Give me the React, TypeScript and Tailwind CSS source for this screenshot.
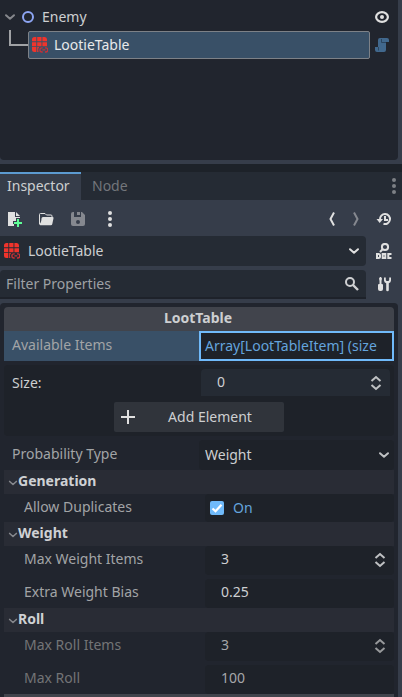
import { useState, type ReactNode } from "react";

function Chevron({ className = "", size = 12 }: { className?: string; size?: number }) {
  return (
    <svg className={className} width={size} height={size} viewBox="0 0 12 12" fill="none" stroke="currentColor" strokeWidth="2" strokeLinecap="round" strokeLinejoin="round" aria-hidden="true">
      <path d="M2 4.2 6 7.8l4-3.6" />
    </svg>
  );
}

function TableIcon() {
  return (
    <svg className="shrink-0" width="16" height="16" viewBox="0 0 16 16" aria-hidden="true">
      <g fill="#f0342c">
        <path d="M2.500 0H4.300v4.300H0V2.500A2.500 2.500 0 0 1 2.500 0z" />
        <path d="M5.200 0h4.300v4.300H5.200zM10.400 0h2A2.500 2.500 0 0 1 15 2.500v1.800h-4.600z" />
        <path d="M0 5.200h4.300v4H0zM5.200 5.200h4.300v4H5.200zM10.400 5.200H15v4h-4.600z" />
        <path d="M0 10.100h4.300V15H2.500A2.500 2.500 0 0 1 0 12.500zM5.200 10.100h1.900a4.500 4.500 0 0 0-.600 4.900H5.200z" />
      </g>
      <path d="M10.700 10.800H10a2 2 0 0 0 0 4.200h.700M13 10.800h.700a2 2 0 0 1 0 4.200H13M10.400 12.900h2.900" fill="none" stroke="#c93035" strokeWidth="1.300" />
    </svg>
  );
}

type IconButtonProps = { label: string; className?: string; tone?: string; children: ReactNode };

function IconButton({ label, className = "", tone = "text-[#e0e0e0]", children }: IconButtonProps) {
  return (
    <button type="button" aria-label={label} className={`flex size-4 shrink-0 items-center justify-center ${tone} ${className}`}>
      {children}
    </button>
  );
}

function Dots() {
  return (
    <svg width="16" height="16" viewBox="0 0 16 16" fill="currentColor" aria-hidden="true">
      <circle cx="8" cy="2" r="2" />
      <circle cx="8" cy="8" r="2" />
      <circle cx="8" cy="14" r="2" />
    </svg>
  );
}

function UpDown() {
  return (
    <svg width="12" height="16" viewBox="0 0 12 16" fill="none" stroke="currentColor" strokeWidth="2" aria-hidden="true">
      <path d="M1.500 6 6 2l4.500 4M1.500 10 6 14l4.500-4" />
    </svg>
  );
}

function Section({ title, children }: { title: string; children: ReactNode }) {
  return (
    <section>
      <h3 className="bg-[#292c35]">
        <button type="button" className="flex h-6 w-full items-center px-1 pb-0.5 font-bold text-[#cfd1d4]">
          <Chevron className="mt-1 text-[#85878c]" size={10} />
          <span>{title}</span>
        </button>
      </h3>
      <div className="flex flex-col gap-1">{children}</div>
    </section>
  );
}

type NumberRowProps = { id: string; label: string; value: string; spin?: boolean; dim?: boolean };

function NumberRow({ id, label, value, spin = false, dim = false }: NumberRowProps) {
  return (
    <div className="grid h-[29px] grid-cols-[201fr_189fr]">
      <label htmlFor={id} className={`flex items-center pb-1 pl-5 ${dim ? "text-[#737476]" : "text-[#a2a4a6]"}`}>
        {label}
      </label>
      <div className={`flex min-w-0 items-center rounded-sm bg-[#1e2229] pr-2 pb-1 pl-4 ${dim ? "text-[#a5a7a9]" : "text-[#cdcfd1]"}`}>
        <input id={id} defaultValue={value} className="w-0 min-w-0 flex-1 bg-transparent outline-none" />
        {spin && (
          <button type="button" aria-label={`Step ${label}`} className={`pt-0.5 ${dim ? "text-[#97999b]" : "text-[#bfc1c3]"}`}>
            <UpDown />
          </button>
        )}
      </div>
    </div>
  );
}

function SceneTree() {
  return (
    <div className="mr-1 h-[160px] rounded-b-sm bg-[#21252e] pt-1">
      <div className="flex h-[26px] items-center pr-2 pl-1">
        <button type="button" aria-label="Collapse Enemy" className="text-[#85878c]">
          <Chevron />
        </button>
        <svg className="ml-1" width="16" height="16" viewBox="0 0 16 16" aria-hidden="true">
          <circle cx="8" cy="8" r="5" fill="none" stroke="#8da5f3" strokeWidth="2" />
        </svg>
        <span className="flex-1 pl-1.5 text-[#cdcfd1]">Enemy</span>
        <IconButton label="Toggle visibility">
          <svg width="16" height="16" viewBox="0 0 16 16" aria-hidden="true">
            <ellipse cx="8" cy="8" rx="5.900" ry="4.900" fill="none" stroke="currentColor" strokeWidth="2.200" />
            <circle cx="8" cy="8" r="2" fill="currentColor" />
          </svg>
        </IconButton>
      </div>
      <div className="flex h-[30px] items-center pr-2 pl-[9px]">
        <div className="h-4 w-[19px] self-start border-b-2 border-l-2 border-[#a0a2a5]" />
        <button type="button" className="flex h-7 flex-1 items-center gap-1.5 rounded-xs border border-[#7d8187] bg-[#395067] pl-[3px] text-left text-[#e8e9ea]">
          <TableIcon />
          <span>LootieTable</span>
        </button>
        <IconButton label="Open script" className="ml-1" tone="text-[#41688d]">
          <svg width="16" height="16" viewBox="0 0 16 16" fill="currentColor" aria-hidden="true">
            <path d="M6 1a2 2 0 0 0-2 2v7H1v3a2 2 0 0 0 2 2h7a2 2 0 0 0 2-2V5h3V3a2 2 0 0 0-2-2z" />
            <path d="M7.500 2v3.500H12M4.500 10v3.500" fill="none" stroke="#2b455f" strokeWidth="1" />
          </svg>
        </IconButton>
      </div>
    </div>
  );
}

function Toolbar() {
  return (
    <div className="flex h-9 items-center justify-between pt-0.5 pr-2.5 pl-1.5">
      <div className="flex gap-4">
        <IconButton label="New resource">
          <svg width="16" height="16" viewBox="0 0 16 16" aria-hidden="true">
            <path fill="currentColor" d="M2 1v14h6v-2H7v-3h3V7h4V6H9V1zM10 1v4h4z" />
            <path fill="#5fff97" d="M11 8h2v3h3v2h-3v3h-2v-3H8v-2h3z" />
          </svg>
        </IconButton>
        <IconButton label="Load resource">
          <svg width="16" height="16" viewBox="0 0 16 16" aria-hidden="true">
            <path fill="none" stroke="currentColor" strokeWidth="1" d="M1.500 13V3.500a1 1 0 0 1 1-1H7L8.500 4H13a1 1 0 0 1 1 1v1" />
            <path fill="currentColor" d="M5 6h9.500a1 1 0 0 1 1 1.200L14.300 13a1.500 1.500 0 0 1-1.500 1.300H2.500a1 1 0 0 1-1-1.500C3 12 3.500 9.500 3.500 7.500A1.500 1.500 0 0 1 5 6z" />
          </svg>
        </IconButton>
        <IconButton label="Save resource" tone="text-[#85888f]">
          <svg width="16" height="16" viewBox="0 0 16 16" fill="currentColor" fillRule="evenodd" aria-hidden="true">
            <path d="M3 1a2 2 0 0 0-2 2v10a2 2 0 0 0 2 2h10a2 2 0 0 0 2-2V4l-3-3h-1v5H4V1zm4 0v3h3V1zm1 8a2 2 0 1 0 0 4 2 2 0 0 0 0-4z" />
          </svg>
        </IconButton>
        <IconButton label="More options">
          <Dots />
        </IconButton>
      </div>
      <div className="flex gap-2">
        <IconButton label="Previous object">
          <svg width="16" height="16" viewBox="0 0 16 16" fill="none" stroke="currentColor" strokeWidth="2" aria-hidden="true">
            <path d="M10 1.500 6.500 8l3.500 6.500" />
          </svg>
        </IconButton>
        <IconButton label="Next object" tone="text-[#85888f]">
          <svg width="16" height="16" viewBox="0 0 16 16" fill="none" stroke="currentColor" strokeWidth="2" aria-hidden="true">
            <path d="M6 1.500 9.500 8 6 14.500" />
          </svg>
        </IconButton>
        <IconButton label="History" className="ml-1">
          <svg width="16" height="16" viewBox="0 0 16 16" fill="none" stroke="currentColor" strokeWidth="2" aria-hidden="true">
            <path d="M4 8.500a5 5 0 1 1 3.500 4.300M9 5v4h3" />
            <path d="M.500 8h6.500L3.700 12z" fill="currentColor" stroke="none" />
          </svg>
        </IconButton>
      </div>
    </div>
  );
}

export default function App() {
  const [allow, setAllow] = useState(true);
  return (
    <main className="flex min-h-screen flex-col bg-[#363d4a] font-['Noto_Sans',sans-serif] text-sm leading-5 text-[#cdcfd1]">
      <SceneTree />
      <div className="mt-1 h-2 bg-[#1d2229]" />
      <div className="flex h-7 items-stretch bg-[#252b34]" role="tablist">
        <button type="button" role="tab" aria-selected="true" className="w-[81px] border-t-2 border-[#5c9bd1] bg-[#363d4a] pb-0.5 pl-[7px] text-left text-[#cdcfd1]">
          Inspector
        </button>
        <button type="button" role="tab" aria-selected="false" className="px-[11px] text-[#73767b]">
          Node
        </button>
        <IconButton label="Dock options" className="my-auto ml-auto" tone="text-[#7d8085]">
          <Dots />
        </IconButton>
      </div>
      <Toolbar />
      <div className="flex h-[30px] items-center gap-2.5 pr-2.5">
        <button type="button" className="flex h-full flex-1 items-center gap-2 rounded-r-sm bg-[#252b34] pr-1.5 pl-1 text-left">
          <TableIcon />
          <span className="flex-1">LootieTable</span>
          <Chevron className="text-[#e0e0e0]" />
        </button>
        <IconButton label="Open documentation">
          <svg width="16" height="16" viewBox="0 0 16 16" fill="none" stroke="currentColor" strokeWidth="2" aria-hidden="true">
            <circle cx="9" cy="4" r="3.100" />
            <path d="M6.800 6 4 9" />
            <path d="M1 11v4h1.500A1.500 1.500 0 0 0 4 13.500v-1A1.500 1.500 0 0 0 2.500 11zM6.700 11h2.600v4H6.700zM15.500 11H12.300v4h3.200" />
          </svg>
        </IconButton>
      </div>
      <div className="mt-1 flex h-[29px] items-center gap-2.5 pr-2.5">
        <div className="flex h-full flex-1 items-center rounded-t-sm border-b-2 border-[#1e222a] bg-[#252b34] pr-1.5 pl-1.5">
          <input aria-label="Filter Properties" placeholder="Filter Properties" className="min-w-0 flex-1 bg-transparent outline-none placeholder:text-[#9ea1a5]" />
          <svg width="16" height="16" viewBox="0 0 16 16" fill="none" stroke="#cfd0d2" strokeWidth="2" aria-hidden="true">
            <circle cx="6" cy="6" r="4" />
            <path d="m9 9 5 5" strokeWidth="2.400" />
          </svg>
        </div>
        <IconButton label="Property tools" className="pb-0.5">
          <svg width="16" height="16" viewBox="0 0 16 16" fill="currentColor" aria-hidden="true">
            <path d="M4 1 3 2.500 3.500 5v3H3a1 1 0 0 0-1 1v4a2 2 0 0 0 2 2h1a2 2 0 0 0 2-2V9a1 1 0 0 0-1-1h-.500V5L6 2.500 5 1z" />
            <path d="M8 1.500v3a3 3 0 0 0 2.200 2.800V14a1.300 1.300 0 0 0 2.600 0V7.300A3 3 0 0 0 15 4.500v-3h-1.800V4l-.700 1h-2L9.800 4V1.500z" />
          </svg>
        </IconButton>
      </div>

      <div className="mt-1 mr-1 flex flex-1 flex-col rounded-t-sm bg-[#21252e] px-1 pt-1">
        <h2 className="h-6 rounded-t-sm bg-[#41444c] pt-px pr-0.5 text-center font-bold">LootTable</h2>
        <div className="grid h-[30px] grid-cols-2">
          <label htmlFor="available-items" className="flex items-center bg-[#395067] pb-0.5 pl-2 text-[#a2a4a6]">
            Available Items
          </label>
          <button id="available-items" type="button" className="overflow-hidden border-2 border-[#70bafa] bg-[#1e2229] pl-1 text-left whitespace-nowrap text-[#64a4dd]">
            Array[LootTableItem] (size
          </button>
        </div>
        <div className="mt-1 flex flex-col gap-1.5 rounded-sm bg-[#1e2229] p-1">
          <div className="grid h-[27px] grid-cols-[193fr_189fr]">
            <label htmlFor="size" className="flex items-center pl-1">
              Size:
            </label>
            <div className="flex min-w-0 items-center rounded-t-sm bg-[#252b34] pr-2 pl-4">
              <input id="size" defaultValue="0" className="w-0 min-w-0 flex-1 bg-transparent pb-0.5 outline-none" />
              <button type="button" aria-label="Step size" className="text-[#bfc1c3]">
                <UpDown />
              </button>
            </div>
          </div>
          <button type="button" className="mx-auto flex h-[30px] w-[170px] items-center rounded-xs bg-[#30343b] pl-1.5">
            <svg width="16" height="16" viewBox="0 0 16 16" stroke="#e0e0e0" strokeWidth="2" aria-hidden="true">
              <path d="M8 1v14M1 8h14" />
            </svg>
            <span className="flex-1 text-center">Add Element</span>
          </button>
        </div>
        <div className="mt-1 grid h-[30px] grid-cols-2">
          <label htmlFor="probability" className="flex items-center pb-0.5 pl-2 text-[#a2a4a6]">
            Probability Type
          </label>
          <div className="relative rounded-sm bg-[#1e2229]">
            <select id="probability" className="size-full appearance-none bg-transparent pl-1.5 outline-none">
              <option>Weight</option>
              <option>Roll</option>
            </select>
            <Chevron className="pointer-events-none absolute top-[9px] right-1 text-[#bfc1c3]" />
          </div>
        </div>

        <Section title="Generation">
          <div className="grid h-7 grid-cols-[201fr_189fr]">
            <span className="flex items-center pb-0.5 pl-5 text-[#a2a4a6]">Allow Duplicates</span>
            <label className="flex items-center rounded-sm bg-[#1e2229] pl-[5px] text-[#64a4dd]">
              <span className="grid size-3.5">
                <input
                  type="checkbox"
                  aria-label="Allow Duplicates"
                  checked={allow}
                  onChange={(e) => setAllow(e.target.checked)}
                  className="col-start-1 row-start-1 size-3.5 appearance-none rounded-xs bg-[#41444c] checked:bg-[#70bafa]"
                />
                {allow && (
                  <svg className="pointer-events-none col-start-1 row-start-1" width="14" height="14" viewBox="0 0 14 14" fill="none" stroke="#fff" strokeWidth="2.200" aria-hidden="true">
                    <path d="m2.500 7.500 3 2.800 6-6.500" />
                  </svg>
                )}
              </span>
              <span className="pl-[9px]">On</span>
            </label>
          </div>
        </Section>
        <Section title="Weight">
          <NumberRow id="max-weight-items" label="Max Weight Items" value="3" spin />
          <NumberRow id="extra-weight-bias" label="Extra Weight Bias" value="0.25" />
        </Section>
        <Section title="Roll">
          <NumberRow id="max-roll-items" label="Max Roll Items" value="3" spin dim />
          <NumberRow id="max-roll" label="Max Roll" value="100" dim />
        </Section>
        <div className="min-h-[3px] flex-1 bg-[#41444c]" />
      </div>
    </main>
  );
}
